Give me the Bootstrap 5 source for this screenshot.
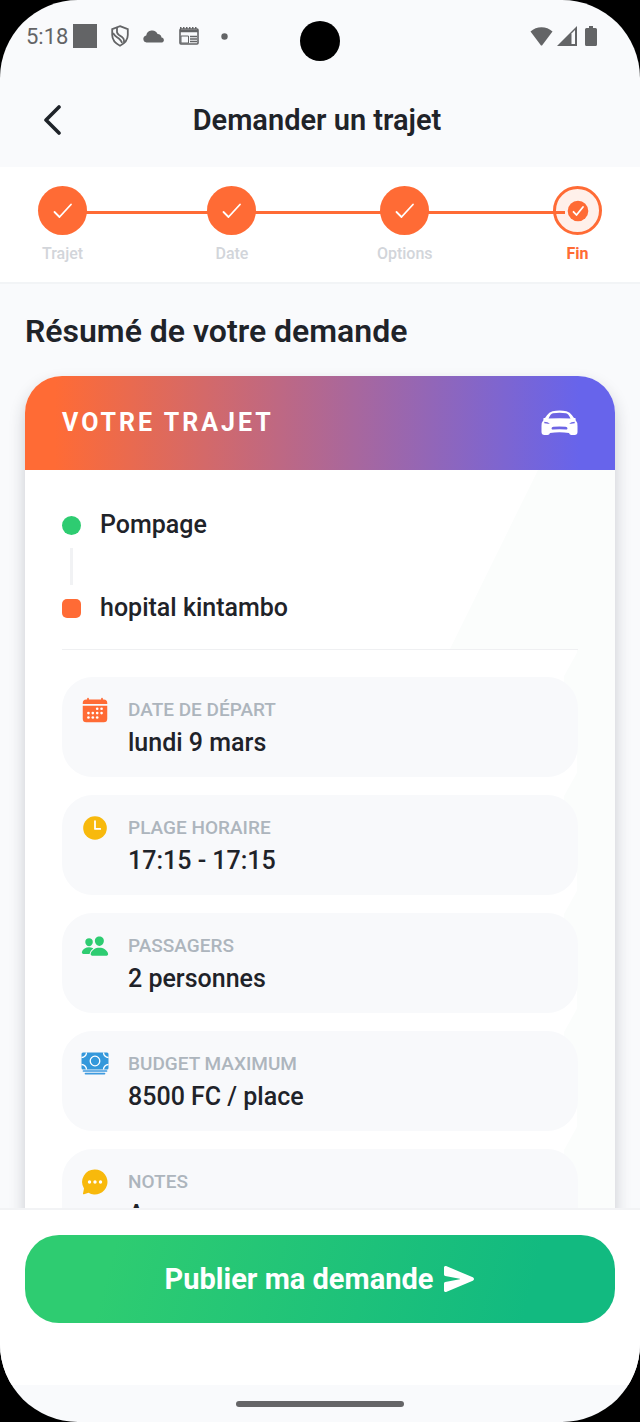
<!DOCTYPE html>
<html lang="fr">
<head>
<meta charset="utf-8">
<meta name="viewport" content="width=device-width, initial-scale=1">
<title>Demander un trajet</title>
<link href="https://cdn.jsdelivr.net/npm/bootstrap@5.3.0/dist/css/bootstrap.min.css" rel="stylesheet">
<style>
:root{--orange:#ff6b35;--green:#2ecc71;--ink:#1f2329;--page:#f9fafc;--panel:#f8f9fb;--label:#adb5bd}
body{background:#000;color:var(--ink);font-family:Roboto,sans-serif}
svg{display:block;flex:none}
.screen{background:var(--page);border-radius:78px}
.status-bar{height:72px;padding:0 41px 0 26px;color:#636466;font-size:22px}
.status-icons{gap:14px;margin-left:5px}
.camera{width:40px;height:40px;top:21px;background:#000}
.app-bar{height:95px;padding:0 34px}
.app-bar h1{font-size:29px;line-height:36px;font-weight:600}
.back-btn{width:36px;height:48px;color:var(--ink)}
.bar-spacer{width:42px}
.steps{padding:19px 38px 18px;border-bottom:2px solid #f2f4f6}
.steps-track{left:62px;right:75px;top:44px;height:3px;background:var(--orange)}
.step{min-width:49px;font-size:16px;line-height:20px;font-weight:500;color:#d2d5da;gap:9px}
.step-dot{width:49px;height:49px;background:var(--orange)}
.step.current{color:var(--orange);font-weight:700}
.step.current .step-dot{background:rgba(255,107,53,.1);border:3px solid var(--orange)}
.content{min-height:0;overflow-y:auto;scrollbar-width:none;padding:27px 25px}
.content h2{font-size:32px;line-height:40px;font-weight:600;margin-bottom:25px}
.trip-card{border-radius:37px;background:#fff;box-shadow:0 8px 16px rgba(32,36,52,.22)}
.trip-head{height:94px;padding:0 37px;border-radius:37px 37px 0 0;color:#fff;background:linear-gradient(90deg,#ff6b35 5%,#6764eb 94%)}
.trip-head h3{font-size:25px;line-height:32px;font-weight:700;letter-spacing:3px}
.trip-body{padding:0 37px 37px;background:linear-gradient(#fbfdfc,#fbfdfc) right/38px 100% no-repeat}
.route{padding:36px 0 22px;border-bottom:1px solid #eff0f2;z-index:0}
.route::after{content:"";position:absolute;z-index:-1;top:0;right:0;bottom:0;width:128px;background:#fbfdfc;clip-path:polygon(88px 0,100% 0,100% 100%,0 100%)}
.place{font-size:25px;line-height:38px;font-weight:500;gap:19px}
.place-mark{width:19px;height:19px}
.place-mark.end{border-radius:5px;background:var(--orange)}
.place-mark.start{background:var(--green)}
.route-line{width:3px;height:37px;margin:4px 8px;background:#f1f2f4}
.details{gap:18px;padding-top:27px;z-index:0}
.detail{min-height:100px;padding:19px 19px 17px;gap:19px;border-radius:31px;background:var(--panel)}
.details::before,.detail::after{content:"";position:absolute;z-index:-1;right:0;width:14px;height:55px;background:#fbfdfc;clip-path:polygon(100% 0,100% 100%,0 100%,0 25px)}
.details::before{top:1px}
.detail::after{bottom:-49px}
.detail dt{font-size:19px;line-height:27px;font-weight:500;color:var(--label)}
.detail dd{font-size:25px;line-height:32px;font-weight:500;margin:4px 0 0}
.action-bar{padding:25px 25px 62px;background:#fff;border-top:2px solid #f2f3f5}
.publish-btn{height:88px;border:0;border-radius:34px;color:#fff;font-size:29px;line-height:36px;font-weight:700;gap:10px;background:linear-gradient(105deg,#2ecc71 15%,#12ba80 85%)}
.publish-btn:hover{color:#fff}
.gesture-bar{height:37px}
.gesture-bar span{width:168px;height:6px;background:#656567}
</style>
</head>
<body>
<div class="screen vh-100 d-flex flex-column overflow-hidden position-relative">
  <div class="status-bar d-flex align-items-center justify-content-between flex-shrink-0">
    <div class="d-flex align-items-center">
      <span>5:18</span>
      <div class="status-icons d-flex align-items-center">
        <svg width="24" height="24"><path d="M0 0h24v24H0z" fill="#636466"/></svg>
        <svg width="18" height="22" viewBox="0 0 18 22" fill="none" stroke="#636466" stroke-width="1.800"><path d="M9 1.200 16.800 4.200V10c0 5-3.500 8.500-7.800 10.700C4.700 18.500 1.200 15 1.200 10V4.200z"/><path d="M6 2.800v4.500q.3 1.500 2 2.700l3 2q2 1.500 2 3.500v2M2 8q1.500 2.500 4 4.200 4.500 3 5 5.800"/></svg>
        <svg width="22" height="13" viewBox="0 0 22 12" fill="#636466"><path d="M3.500 12a3.600 3.600 0 0 1-.3-7.100A6 6 0 0 1 14.600 3.500 4 4 0 0 1 18.500 7 2.600 2.600 0 0 1 19.300 12z"/></svg>
        <svg width="20" height="18" viewBox="0 0 20 18" fill="none" stroke="#636466"><rect x="1" y="2" width="18" height="15" rx="1" stroke-width="1.600"/><path d="M1 1h18" stroke-width="2" stroke-dasharray="1.500 1.500"/><path d="M1 4h18" stroke-width="2.500"/><path d="M2 9h7.500v7H2z"/><path d="M11 9.500h7M11 12h7M11 14.500h7" stroke-width="1.500"/></svg>
        <svg class="ms-2" width="7" height="7"><circle cx="3.500" cy="3.500" r="3.200" fill="#636466"/></svg>
      </div>
    </div>
    <div class="d-flex align-items-center gap-1">
      <svg width="23" height="19" viewBox="0 0 22 19" fill="#636466"><path d="M0 4.500C6-1.300 16-1.300 22 4.500L11.500 18.500h-1z"/></svg>
      <svg width="20" height="20" viewBox="0 0 20 20"><path d="M0 20 20 0v20z" fill="#636466"/><path d="M14.500 7.500 18 4v14h-3.500z" fill="#f9fafc"/></svg>
      <svg width="18" height="20" viewBox="-4 0 18 20" fill="#636466"><path d="M4 0h4v2h2.500Q12 2 12 3.500v15q0 1.500-1.500 1.500h-9Q0 20 0 18.500v-15Q0 2 1.500 2H4z"/></svg>
    </div>
  </div>
  <div class="camera position-absolute start-50 translate-middle-x rounded-circle"></div>

  <header class="app-bar d-flex align-items-center justify-content-between flex-shrink-0">
    <button type="button" class="back-btn btn p-0 border-0 d-flex align-items-center justify-content-center" aria-label="Retour">
      <svg width="20" height="30" viewBox="0 0 20 30" fill="none" stroke="currentColor" stroke-width="3.600" stroke-linecap="round" stroke-linejoin="round"><path d="M17 2 4 15l13 13"/></svg>
    </button>
    <h1 class="m-0">Demander un trajet</h1>
    <span class="bar-spacer"></span>
  </header>

  <nav class="steps bg-white position-relative flex-shrink-0" aria-label="Étapes">
    <div class="steps-track position-absolute"></div>
    <ol class="list-unstyled m-0 d-flex justify-content-between position-relative">
      <li class="step d-flex flex-column align-items-center"><span class="step-dot rounded-circle d-flex align-items-center justify-content-center"><svg width="20" height="16" fill="none" stroke="#fff" stroke-width="1.800" stroke-linecap="round" stroke-linejoin="round"><path d="M1.500 9 6.500 14 18 1.500"/></svg></span>Trajet</li>
      <li class="step d-flex flex-column align-items-center"><span class="step-dot rounded-circle d-flex align-items-center justify-content-center"><svg width="20" height="16" fill="none" stroke="#fff" stroke-width="1.800" stroke-linecap="round" stroke-linejoin="round"><path d="M1.500 9 6.500 14 18 1.500"/></svg></span>Date</li>
      <li class="step d-flex flex-column align-items-center"><span class="step-dot rounded-circle d-flex align-items-center justify-content-center"><svg width="20" height="16" fill="none" stroke="#fff" stroke-width="1.800" stroke-linecap="round" stroke-linejoin="round"><path d="M1.500 9 6.500 14 18 1.500"/></svg></span>Options</li>
      <li class="step current d-flex flex-column align-items-center" aria-current="step"><span class="step-dot rounded-circle d-flex align-items-center justify-content-center"><svg width="24" height="24" viewBox="0 0 24 24"><circle cx="12" cy="12" r="11.500" fill="#fff1ec"/><circle cx="12" cy="12" r="10.300" fill="#ff6b35"/><path d="m7.500 12.800 3 3.200 6.500-8" fill="none" stroke="#fff" stroke-width="1.800" stroke-linecap="round" stroke-linejoin="round"/></svg></span>Fin</li>
    </ol>
  </nav>

  <main class="content flex-grow-1">
    <h2>Résumé de votre demande</h2>
    <section class="trip-card">
      <div class="trip-head d-flex align-items-center justify-content-between">
        <h3 class="m-0">VOTRE TRAJET</h3>
        <svg width="37" height="26" viewBox="0 0 37 26" fill="#fff"><path fill-rule="evenodd" d="M11.500 1.200Q18.500 0 25.500 1.200 29 2 31 5.200L33 8q1.500-.3 1.800.8l-.3 1.200q2 2 2 6V22q0 3-3 3h-3q-2 0-2.500-2-9.500-1.500-19 0-.5 2-2.500 2h-3q-3 0-3-3v-6q0-4 2-6l-.3-1.200Q2.500 7.700 4 8l2-2.800Q8 2 11.500 1.200zM12 3.200Q9.500 3.600 7.500 8.600q11-.8 22 0-2-5-4.500-5.400-6.500-1-13 0zM3.300 11.800v1.500q3 .8 5.500.3-2-1.800-5.500-1.800zm30.400 0q-3.500 0-5.500 1.800 2.500.5 5.500-.3zM12.500 16.800q-2 .4-2 1.600t2 1.200q6-.7 12 0 2 0 2-1.200t-2-1.600q-6-.8-12 0z"/></svg>
      </div>
      <div class="trip-body">
        <div class="route position-relative">
          <div class="place d-flex align-items-center"><span class="place-mark start rounded-circle"></span>Pompage</div>
          <div class="route-line"></div>
          <div class="place d-flex align-items-center"><span class="place-mark end"></span>hopital kintambo</div>
        </div>
        <dl class="details d-flex flex-column m-0 position-relative">
          <div class="detail d-flex position-relative">
            <svg width="28" height="28" viewBox="0 0 512 512" fill="#ff6b35"><path d="M480 128a64 64 0 0 0-64-64h-16V48a16 16 0 0 0-32 0v16H144V48a16 16 0 0 0-32 0v16H96a64 64 0 0 0-64 64v16h448zM32 416a64 64 0 0 0 64 64h320a64 64 0 0 0 64-64V176H32z"/><g fill="#fff"><circle cx="296" cy="232" r="24"/><circle cx="376" cy="232" r="24"/><circle cx="136" cy="312" r="24"/><circle cx="216" cy="312" r="24"/><circle cx="296" cy="312" r="24"/><circle cx="376" cy="312" r="24"/><circle cx="136" cy="392" r="24"/><circle cx="216" cy="392" r="24"/><circle cx="296" cy="392" r="24"/></g></svg>
            <div><dt>DATE DE DÉPART</dt><dd>lundi 9 mars</dd></div>
          </div>
          <div class="detail d-flex position-relative">
            <svg width="28" height="28" viewBox="0 0 512 512"><circle cx="256" cy="256" r="216" fill="#f8b90c"/><path d="M256 128v144h96" fill="none" stroke="#fff" stroke-width="32" stroke-linecap="round" stroke-linejoin="round"/></svg>
            <div><dt>PLAGE HORAIRE</dt><dd>17:15 - 17:15</dd></div>
          </div>
          <div class="detail d-flex position-relative">
            <svg width="28" height="28" viewBox="0 0 512 512" fill="#2ecc71"><path d="M336 256c-20.560 0-40.440-9.180-56-25.840-15.130-16.250-24.370-37.920-26-61-1.740-24.620 5.770-47.260 21.140-63.760S312 80 336 80c23.830 0 45.380 9.060 60.700 25.520 15.470 16.620 23 39.220 21.260 63.630-1.670 23.110-10.900 44.770-26 61C376.440 246.820 356.570 256 336 256zm131.830 176H204.180a27.710 27.710 0 0 1-22-10.670 30.220 30.220 0 0 1-5.260-25.790c8.420-33.810 29.280-61.850 60.320-81.080C264.790 297.400 299.860 288 336 288c36.850 0 71 9 98.710 26.050 31.110 19.130 52 47.330 60.380 81.550a30.270 30.270 0 0 1-5.320 25.780A27.680 27.680 0 0 1 467.830 432zM147 260c-35.190 0-66.130-32.720-69-72.930-1.420-20.600 5-39.650 18-53.620 12.860-13.830 31-21.450 51-21.450s38 7.660 50.930 21.570c13.100 14.080 19.500 33.090 18 53.520-2.870 40.200-33.800 72.910-68.930 72.910zm65.660 31.450c-17.590-8.600-40.420-12.900-65.650-12.900-29.460 0-58.070 7.680-80.570 21.620-25.510 15.830-42.670 38.880-49.600 66.710a27.390 27.390 0 0 0 4.790 23.360A25.320 25.320 0 0 0 41.720 400h111a8 8 0 0 0 7.870-6.570c8.480-34.060 28.760-64.720 58.120-85.700a8 8 0 0 0-.630-13.390c-1.570-.920-3.370-1.890-5.420-2.890z"/></svg>
            <div><dt>PASSAGERS</dt><dd>2 personnes</dd></div>
          </div>
          <div class="detail d-flex position-relative">
            <svg width="28" height="28" viewBox="0 0 28 28"><defs><clipPath id="note"><rect x=".500" y="2.500" width="27" height="17" rx="1.500"/></clipPath></defs><g clip-path="url(#note)"><path d="M0 2h28v18H0z" fill="#3498db"/><g fill="none" stroke="#fff" stroke-width="1.300"><circle cx="14" cy="11" r="4.800"/><circle cx=".5" cy="2.500" r="5"/><circle cx="27.500" cy="2.500" r="5"/><circle cx=".5" cy="19.500" r="5"/><circle cx="27.500" cy="19.500" r="5"/></g></g><path d="M2.500 21h23M4.500 23.600h19" stroke="#3f9bdf" stroke-width="1.700" stroke-linecap="round"/></svg>
            <div><dt>BUDGET MAXIMUM</dt><dd>8500 FC / place</dd></div>
          </div>
          <div class="detail d-flex position-relative">
            <svg width="28" height="28" viewBox="0 0 28 28"><path d="M14 1.500a12.500 12.500 0 1 1-6.500 23.200L3 26.300q-1.200.2-1-.9L3 20.500A12.500 12.500 0 0 1 14 1.500z" fill="#f8b90c"/><g fill="#fff"><circle cx="8.500" cy="14" r="1.700"/><circle cx="14" cy="14" r="1.700"/><circle cx="19.500" cy="14" r="1.700"/></g></svg>
            <div><dt>NOTES</dt><dd>Aucune</dd></div>
          </div>
        </dl>
      </div>
    </section>
  </main>

  <footer class="action-bar flex-shrink-0">
    <button type="button" class="publish-btn btn w-100 d-flex align-items-center justify-content-center">Publier ma demande
      <svg width="32" height="32" viewBox="0 0 512 512" fill="#fff"><path d="M476.590 227.050 49.350 49.840A23.560 23.560 0 0 0 27.140 52 24.650 24.650 0 0 0 16 72.590v113.290a24 24 0 0 0 19.520 23.570l232.930 43.070a4 4 0 0 1 0 7.860L35.530 303.450A24 24 0 0 0 16 327v113.310A23.570 23.570 0 0 0 26.590 460a23.940 23.940 0 0 0 22.740 2.070L476.400 285.940a32 32 0 0 0 .190-58.890z"/></svg>
    </button>
  </footer>
  <div class="gesture-bar d-flex align-items-center justify-content-center flex-shrink-0"><span class="rounded-pill"></span></div>
</div>
<script src="https://cdn.jsdelivr.net/npm/bootstrap@5.3.0/dist/js/bootstrap.bundle.min.js"></script>
</body>
</html>
